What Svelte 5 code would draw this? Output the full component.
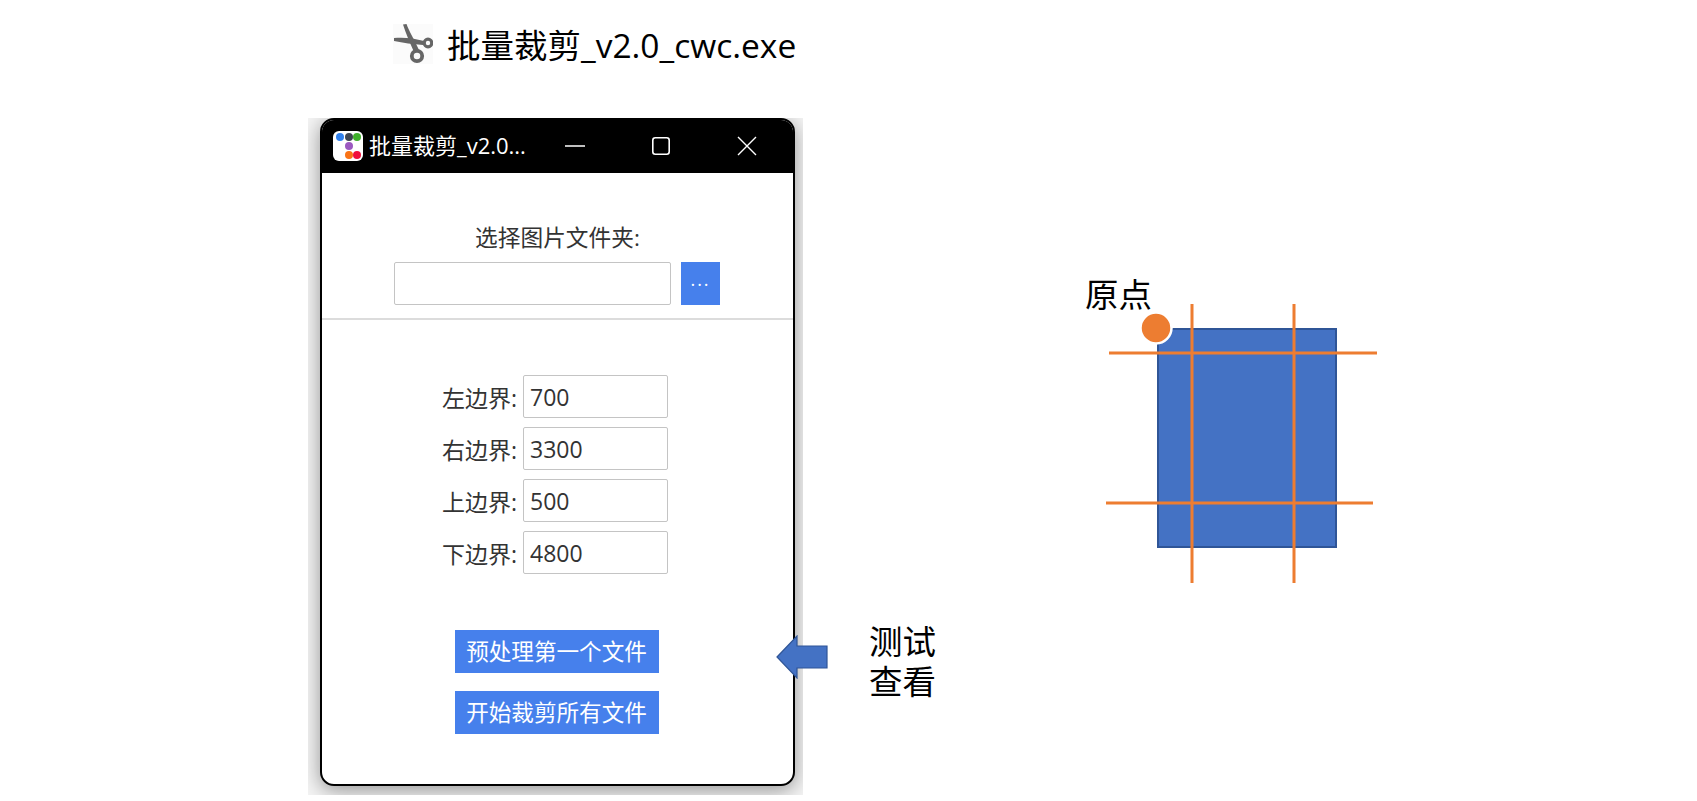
<script>
	const fields = [
		{ label: '左边界:', value: '700' },
		{ label: '右边界:', value: '3300' },
		{ label: '上边界:', value: '500' },
		{ label: '下边界:', value: '4800' },
	];
</script>

<div class="page">
	<div class="left">
		<div class="exe">
			<svg class="scissors" width="40" height="40" viewBox="0 0 40 40" fill="none" stroke="#666">
				<path d="M10 0.5 L13.5 0 C16 7 21 15 26 26 L21 28 C17 19 13 10 10 0.5Z" fill="#666" stroke="none" />
				<path d="M1 14 C10 13 21 14 31 17 L30 21 C20 20 10 19 1 17Z" fill="#666" stroke="none" />
				<circle cx="24" cy="32" r="5.2" stroke-width="3.8" />
				<circle cx="35" cy="19" r="3.8" stroke-width="3.2" />
			</svg>
			<span>批量裁剪_v2.0_cwc.exe</span>
		</div>

		<div class="shadow">
			<div class="window">
				<div class="titlebar">
					<svg class="appicon" width="30" height="30" viewBox="0 0 30 30">
						<rect width="30" height="30" rx="6" fill="#fff" />
						<circle cx="7" cy="6" r="4" fill="#2f80ed" />
						<circle cx="16" cy="6" r="4" fill="#3d4450" />
						<circle cx="24" cy="6" r="4" fill="#3fb02c" />
						<circle cx="16" cy="15" r="4" fill="#9b59c0" />
						<circle cx="16" cy="24" r="4" fill="#f97316" />
						<circle cx="24" cy="24" r="4" fill="#f0103c" />
					</svg>
					<span class="title">批量裁剪_v2.0...</span>
					<div class="controls">
						<svg width="20" height="20" viewBox="0 0 20 20"><path d="M0 10H20" stroke="#fff" stroke-width="1.6" /></svg>
						<svg width="20" height="20" viewBox="0 0 20 20"><rect x="1.8" y="1.8" width="16.4" height="16.4" rx="2.5" fill="none" stroke="#fff" stroke-width="1.6" /></svg>
						<svg width="20" height="20" viewBox="0 0 20 20"><path d="M1 1L19 19M19 1L1 19" stroke="#fff" stroke-width="1.4" /></svg>
					</div>
				</div>

				<div class="folder">
					<div class="folder-label">选择图片文件夹:</div>
					<div class="folder-row">
						<input class="path" type="text" />
						<button class="browse">...</button>
					</div>
				</div>

				<div class="bounds">
					{#each fields as f}
						<div class="field">
							<label for={f.label}>{f.label}</label>
							<input id={f.label} type="text" value={f.value} />
						</div>
					{/each}
				</div>

				<div class="actions">
					<button class="action">预处理第一个文件</button>
					<button class="action">开始裁剪所有文件</button>
				</div>
			</div>
		</div>
	</div>

	<div class="callout">
		<svg width="52" height="44" viewBox="0 0 52 44">
			<path d="M1 22L21 1V11H51V33H21V43Z" fill="#4472c4" stroke="#2f5597" stroke-width="1.2" />
		</svg>
		<div class="callout-text">测试<br />查看</div>
	</div>

	<svg class="diagram" width="300" height="320" viewBox="1085 270 300 320">
		<rect x="1158" y="329" width="178" height="218" fill="#4472c4" stroke="#2f5597" stroke-width="2" />
		<g stroke="#ed7d31" stroke-width="3">
			<path d="M1192 304V583" />
			<path d="M1294 304V583" />
			<path d="M1109 353H1377" />
			<path d="M1106 503H1373" />
		</g>
		<circle cx="1156" cy="328" r="15.5" fill="#ed7d31" stroke="#fff" stroke-width="2.5" />
		<text x="1085" y="307">原点</text>
	</svg>
</div>

<style>
	:global(body) {
		margin: 0;
		background: #fff;
	}

	.page {
		display: flex;
		align-items: flex-start;
		width: 1697px;
		height: 801px;
		overflow: hidden;
		font-family: "Open Sans", "Noto Sans CJK SC", sans-serif;
	}

	.left {
		margin-left: 308px;
		width: 495px;
		flex: none;
	}

	.exe {
		display: flex;
		align-items: center;
		gap: 14px;
		height: 40px;
		margin: 23px 0 0 85px;
		font-size: 33.5px;
		color: #000;
		white-space: nowrap;
	}

	.scissors {
		flex: none;
		margin-top: 2px;
		background: #fbfbfb;
	}

	.shadow {
		margin-top: 55px;
		padding: 0 8px 9px 12px;
		overflow: hidden;
		background: #f4f4f4;
	}

	.window {
		height: 668px;
		box-sizing: border-box;
		border: 2px solid #000;
		border-radius: 14px;
		background: #fff;
		box-shadow: 0 4px 20px rgba(0, 0, 0, 0.4);
		overflow: hidden;
	}

	.titlebar {
		display: flex;
		align-items: center;
		height: 53px;
		background: #000;
		color: #fff;
		padding: 0 0 2px 11px;
		box-sizing: border-box;
	}

	.appicon {
		flex: none;
	}

	.title {
		margin: 0 0 3px 6px;
		font-size: 22px;
		white-space: nowrap;
	}

	.controls {
		display: flex;
		gap: 66px;
		margin-left: 39px;
	}

	.folder {
		height: 147px;
		box-sizing: border-box;
		padding-top: 50px;
		border-bottom: 2px solid #dcdcdc;
	}

	.folder-label {
		text-align: center;
		font-size: 22.7px;
		line-height: 30px;
		color: #333;
	}

	.folder-row {
		display: flex;
		gap: 10px;
		margin: 9px 0 0 72px;
	}

	input {
		box-sizing: border-box;
		height: 43px;
		border: 1px solid #c4c4c4;
		border-radius: 2px;
		background: #fff;
		color: #333;
		font: inherit;
		font-size: 23px;
		padding: 0 6px;
		outline: none;
	}

	.path {
		width: 277px;
	}

	.browse {
		width: 39px;
		height: 43px;
		border: none;
		padding: 0 0 10px;
		background: #4680ec;
		color: #fff;
		font: inherit;
		font-size: 18px;
		letter-spacing: 2px;
	}

	.bounds {
		display: flex;
		flex-direction: column;
		gap: 9px;
		padding-top: 55px;
	}

	.field {
		display: flex;
		align-items: center;
		justify-content: flex-end;
		padding-right: 125px;
		gap: 6px;
	}

	.field label {
		font-size: 23px;
		color: #333;
	}

	.field input {
		width: 145px;
	}

	.actions {
		display: flex;
		flex-direction: column;
		align-items: center;
		gap: 18px;
		margin-top: 56px;
		padding-right: 2px;
	}

	.action {
		width: 204px;
		height: 43px;
		border: none;
		padding: 0 0 2px;
		background: #4680ec;
		color: #fff;
		font: inherit;
		font-size: 22.6px;
		white-space: nowrap;
	}

	.callout {
		display: flex;
		align-items: flex-start;
		flex: none;
		gap: 41px;
		margin: 621px 0 0 -27px;
	}

	.callout svg {
		margin-top: 14px;
	}

	.callout-text {
		font-size: 33.5px;
		line-height: 40px;
		color: #000;
	}

	.diagram {
		flex: none;
		margin: 270px 0 0 148.5px;
	}

	.diagram text {
		font-size: 33.5px;
		fill: #000;
	}
</style>
